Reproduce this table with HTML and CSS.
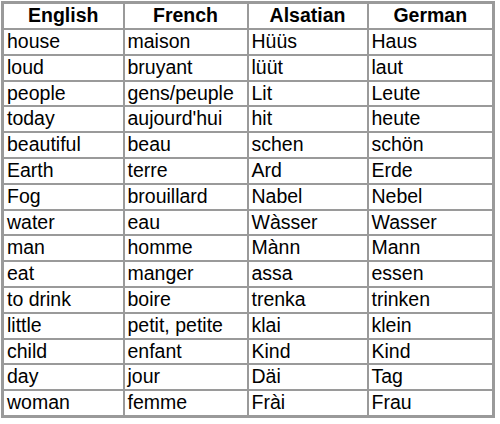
FILE: index.html
```html
<!DOCTYPE html>
<html>
<head>
<meta charset="utf-8">
<link rel="stylesheet" href="styles.css">
</head>
<body>
<div class="wrap">
<table class="vocab">
<colgroup>
<col class="c1"><col class="c2"><col class="c3"><col class="c4">
</colgroup>
<thead>
<tr><th>English</th><th>French</th><th>Alsatian</th><th>German</th></tr>
</thead>
<tbody>
<tr><td>house</td><td>maison</td><td>Hüüs</td><td>Haus</td></tr>
<tr><td>loud</td><td>bruyant</td><td>lüüt</td><td>laut</td></tr>
<tr><td>people</td><td>gens/peuple</td><td>Lit</td><td>Leute</td></tr>
<tr><td>today</td><td>aujourd'hui</td><td>hit</td><td>heute</td></tr>
<tr><td>beautiful</td><td>beau</td><td>schen</td><td>schön</td></tr>
<tr><td>Earth</td><td>terre</td><td>Ard</td><td>Erde</td></tr>
<tr><td>Fog</td><td>brouillard</td><td>Nabel</td><td>Nebel</td></tr>
<tr><td>water</td><td>eau</td><td>Wàsser</td><td>Wasser</td></tr>
<tr><td>man</td><td>homme</td><td>Mànn</td><td>Mann</td></tr>
<tr><td>eat</td><td>manger</td><td>assa</td><td>essen</td></tr>
<tr><td>to drink</td><td>boire</td><td>trenka</td><td>trinken</td></tr>
<tr><td>little</td><td>petit, petite</td><td>klai</td><td>klein</td></tr>
<tr><td>child</td><td>enfant</td><td>Kind</td><td>Kind</td></tr>
<tr><td>day</td><td>jour</td><td>Däi</td><td>Tag</td></tr>
<tr><td>woman</td><td>femme</td><td>Frài</td><td>Frau</td></tr>
</tbody>
</table>
</div>
</body>
</html>
```
FILE: styles.css
```css
html, body {
  margin: 0;
  padding: 0;
  background: #fff;
}
.wrap {
  padding: 1px 0 0 1px;
}
.vocab {
  border-collapse: collapse;
  border: 3px solid #9a9a9a;
  font-family: "Liberation Sans", Arial, sans-serif;
  font-size: 19.5px;
  color: #000;
  table-layout: fixed;
  width: 491px;
}
.c1 { width: 121px; }
.c2 { width: 124px; }
.c3 { width: 120px; }
.c4 { width: 126px; }
.vocab th,
.vocab td {
  border: 2px solid #9a9a9a;
  padding: 0 4px;
  height: 23.8px;
  line-height: 23.8px;
  white-space: nowrap;
  overflow: hidden;
}
.vocab th {
  font-weight: bold;
  text-align: center;
  font-size: 19.5px;
  height: 24px;
}
.vocab td {
  text-align: left;
  padding-left: 3px;
}
```
